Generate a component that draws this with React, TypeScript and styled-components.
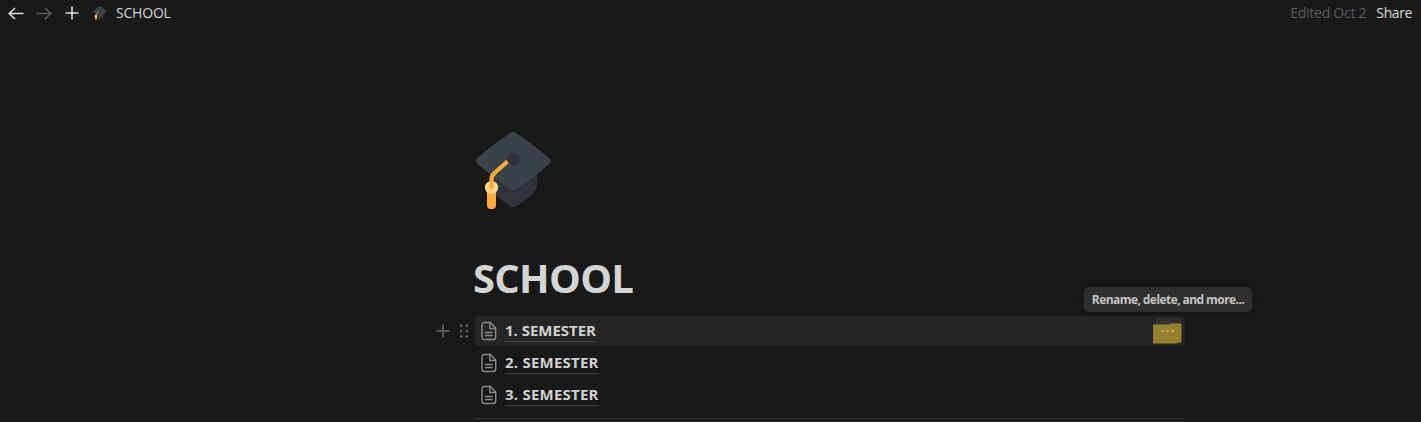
import React from "react";
import styled, { createGlobalStyle } from "styled-components";

const GlobalStyle = createGlobalStyle`
  * { box-sizing: border-box; }
  body {
    margin: 0;
    background: #191919;
    color: #d4d4d4;
    font-family: "Open Sans", "Noto Sans", sans-serif;
    overflow: hidden;
  }
`;

const Page = styled.div`
  width: 100%;
  height: 422px;
  overflow: hidden;
`;

const TopBar = styled.header`
  display: flex;
  align-items: center;
  justify-content: space-between;
  height: 26px;
  padding: 0 9px 0 7px;
  font-size: 14px;
`;

const BarGroup = styled.div<{ $gap: number }>`
  display: flex;
  align-items: center;
  gap: ${(p) => p.$gap}px;
`;

const BarIcon = styled.svg<{ $dim?: boolean }>`
  display: block;
  width: 18px;
  height: 18px;
  fill: none;
  stroke: ${(p) => (p.$dim ? "#5b5b5b" : "#dcdcdc")};
  stroke-width: 1.6;
`;

const Crumb = styled.div`
  display: flex;
  align-items: center;
  gap: 9px;
  margin-left: 2px;
  color: #d6d6d6;
`;

const BarText = styled.span<{ $color: string; $spacing: number }>`
  color: ${(p) => p.$color};
  line-height: 20px;
  font-size: 14px;
  letter-spacing: ${(p) => p.$spacing}px;
  white-space: nowrap;
`;

const Content = styled.main`
  width: 710px;
  margin-left: 475px;
  padding-top: 105px;
`;

const Cap = styled.svg<{ $size: number }>`
  display: block;
  width: ${(p) => p.$size}px;
  height: ${(p) => p.$size}px;
`;

const Title = styled.h1`
  margin: 41px 0 0 -2px;
  height: 56px;
  line-height: 56px;
  font-size: 40px;
  font-weight: 700;
  letter-spacing: -0.7px;
  color: #d4d4d4;
`;

const List = styled.div`
  display: flex;
  flex-direction: column;
  gap: 2px;
  margin-top: 10px;
`;

const Row = styled.div<{ $active?: boolean }>`
  position: relative;
  display: flex;
  align-items: center;
  height: 30px;
  padding: 0 3px 0 5px;
  border-radius: 4px;
  background: ${(p) => (p.$active ? "#252525" : "transparent")};
`;

const Handles = styled.div`
  position: absolute;
  right: 100%;
  top: 0;
  display: flex;
  align-items: center;
  gap: 7px;
  height: 30px;
  margin-right: 4px;
`;

const HandleIcon = styled.svg`
  display: block;
  width: 14px;
  height: 16px;
  fill: #696969;
  stroke: #696969;
`;

const PageIcon = styled.svg`
  display: block;
  width: 18px;
  height: 20px;
  margin-right: 7px;
  fill: none;
  stroke: #8b8b8b;
  stroke-width: 1.4;
  stroke-linejoin: round;
  stroke-linecap: round;
`;

const RowLabel = styled.span<{ $spacing: number }>`
  height: 22px;
  margin-top: -1px;
  line-height: 20px;
  font-size: 15px;
  font-weight: 700;
  letter-spacing: ${(p) => p.$spacing}px;
  color: #d0d0d0;
  border-bottom: 1px solid #414141;
  white-space: nowrap;
`;

const MoreButton = styled.button`
  display: block;
  width: 30px;
  height: 27px;
  margin-left: auto;
  padding: 0;
  border: 0;
  background: none;
`;

const Tooltip = styled.div`
  position: absolute;
  right: -67px;
  top: -29px;
  width: 168px;
  height: 25px;
  border-radius: 5px;
  background: #2f2f2f;
  box-shadow: 0 1px 4px rgba(0, 0, 0, 0.35);
  color: #c4c4c4;
  font-size: 12px;
  font-weight: 700;
  line-height: 25px;
  letter-spacing: -0.57px;
  text-align: center;
  white-space: nowrap;
`;

const Divider = styled.hr`
  height: 1px;
  margin: 8px 0 0;
  border: 0;
  background: #373737;
`;

const GraduationCap = ({ size }: { size: number }) => (
  <Cap $size={size} viewBox="0 0 78 78">
    <path d="M17 33L61 42Q64 52 61 58Q57 66 41 75.200Q38 77 35 75L17 62Z" fill="#2f343b" />
    <path
      d="M36 1.500Q38 .5 40 1.500Q58 13 74.500 27.500Q77 30 74.500 32.500Q60 46 40.500 58.800Q38 60.500 35.500 58.800Q17 46 2 32.500Q0 30 2 27.500Q18 13 36 1.500Z"
      fill="#3b4248"
    />
    <circle cx="38.500" cy="28.300" r="6.500" fill="#30353c" />
    <rect x="12" y="57" width="9" height="21" rx="4" fill="#ffaa3b" />
    <circle cx="16.500" cy="56.500" r="6.600" fill="#ffd88d" />
    <path d="M32.500 30.500L19.500 42Q16.500 45 16.500 48V56" fill="none" stroke="#ffaa3b" strokeWidth="4.200" />
    <circle cx="16.500" cy="56" r="2.200" fill="#ffaa3b" />
  </Cap>
);

const rows = [
  { label: "1. SEMESTER", spacing: -0.03 },
  { label: "2. SEMESTER", spacing: 0.23 },
  { label: "3. SEMESTER", spacing: 0.23 },
];

export default function App() {
  return (
    <Page>
      <GlobalStyle />
      <TopBar>
        <BarGroup $gap={10}>
          <BarIcon viewBox="0 0 18 18"><path d="M16.500 9.500H2.500M8 4L2.200 9.500L8 15" /></BarIcon>
          <BarIcon $dim viewBox="0 0 18 18"><path d="M1.500 9.500H15.500M10 4L15.800 9.500L10 15" /></BarIcon>
          <BarIcon viewBox="0 0 18 18"><path d="M2.500 9H15.500M9 2.500V15.500" /></BarIcon>
          <Crumb>
            <GraduationCap size={14} />
            <BarText $color="#d6d6d6" $spacing={-0.2}>SCHOOL</BarText>
          </Crumb>
        </BarGroup>
        <BarGroup $gap={10}>
          <BarText $color="#5a5a5a" $spacing={-0.25}>Edited Oct 2</BarText>
          <BarText $color="#dcdcdc" $spacing={-0.4}>Share</BarText>
        </BarGroup>
      </TopBar>
      <Content>
        <GraduationCap size={78} />
        <Title>SCHOOL</Title>
        <List>
          {rows.map((row, i) => (
            <Row key={row.label} $active={i === 0}>
              {i === 0 && (
                <Handles>
                  <HandleIcon viewBox="0 0 14 16"><path d="M.5 8H13.500M7 1.500V14.500" fill="none" strokeWidth="1.400" /></HandleIcon>
                  <HandleIcon viewBox="0 0 14 16" stroke="none">
                    {[2.5, 8, 13.5].map((y) => [4.2, 9.8].map((x) => (
                      <circle key={`${x}-${y}`} cx={x} cy={y} r="0.900" strokeWidth="0.800" />
                    )))}
                  </HandleIcon>
                </Handles>
              )}
              <PageIcon viewBox="0 0 18 20">
                <path d="M4.500 1.500H10.500L15.700 7V16Q15.700 18.500 13.200 18.500H4.500Q2 18.500 2 16V4Q2 1.500 4.500 1.500ZM9.800 1.700V7.500H15.500M5.500 11.500H12M5.500 14.500H12" />
              </PageIcon>
              <RowLabel $spacing={row.spacing}>{row.label}</RowLabel>
              {i === 0 && (
                <>
                  <MoreButton aria-label="More">
                    <svg width="30" height="27" viewBox="0 0 30 27">
                      <rect x="3" y="0" width="26" height="24" rx="3" fill="#303030" />
                      <path d="M1 6.500H16L19 5.500H29.500V24.500H26L25 25.500H1Z" fill="#95812e" />
                      <g fill="#c8b76a">
                        <circle cx="10.500" cy="13" r="1.300" />
                        <circle cx="15.500" cy="13" r="1.300" />
                        <circle cx="20.500" cy="13" r="1.300" />
                      </g>
                    </svg>
                  </MoreButton>
                  <Tooltip>Rename, delete, and more...</Tooltip>
                </>
              )}
            </Row>
          ))}
        </List>
        <Divider />
      </Content>
    </Page>
  );
}
